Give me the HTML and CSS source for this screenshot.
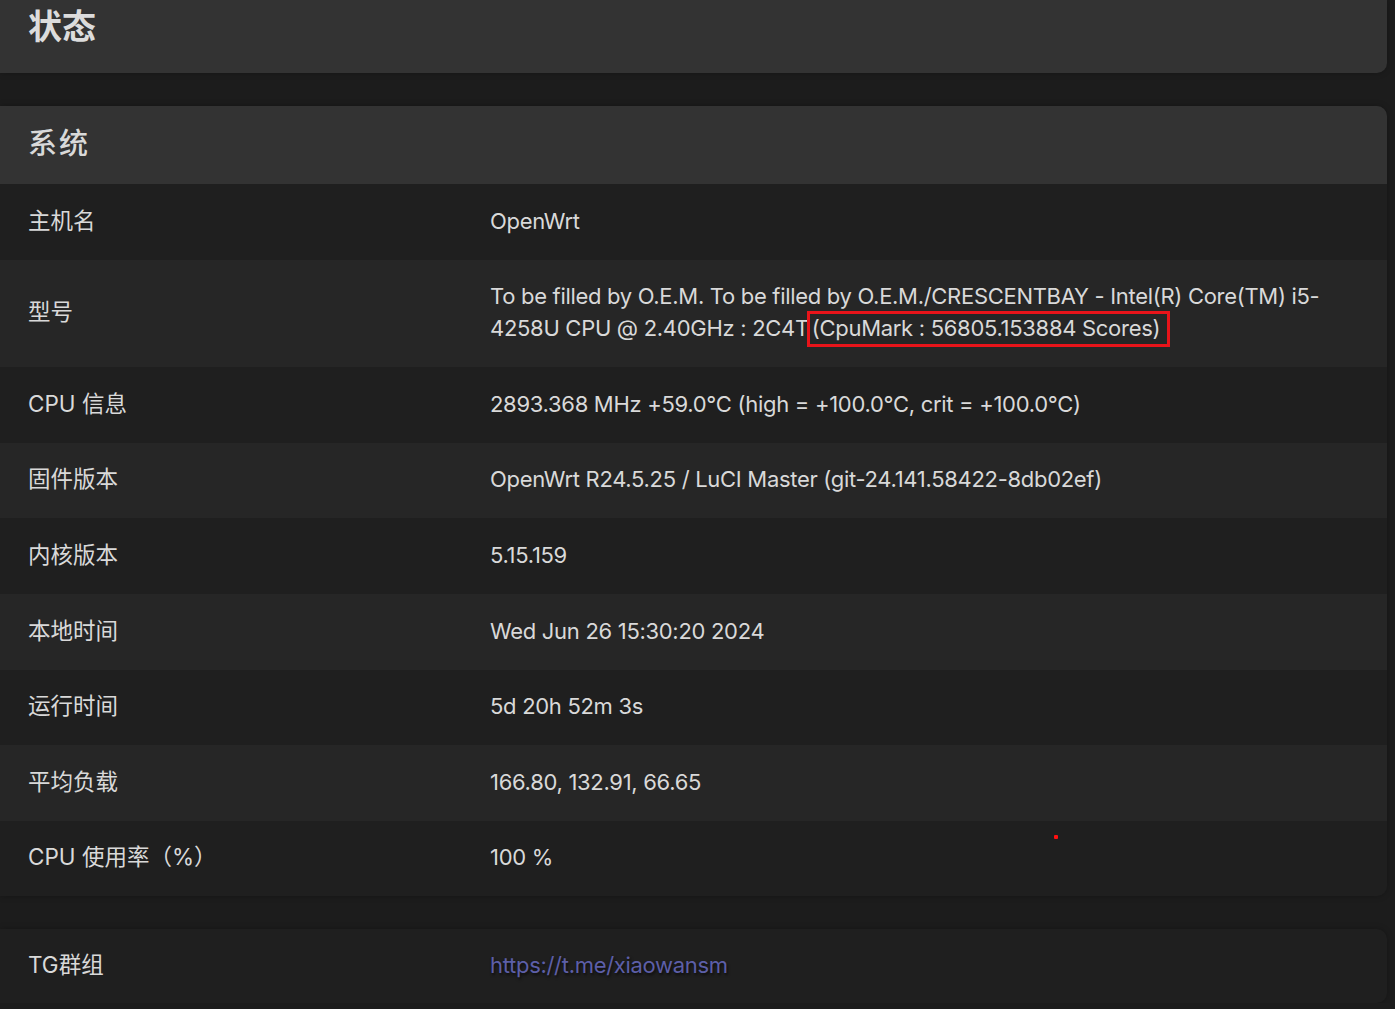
FILE: index.html
```html
<!DOCTYPE html>
<html lang="zh-CN">
<head>
<meta charset="utf-8">
<title>状态</title>
<link rel="stylesheet" href="styles.css">
</head>
<body>
<main class="page">
  <section class="card card-status">
    <h2 class="page-title">状态</h2>
  </section>

  <section class="card card-system">
    <h3 class="card-title">系统</h3>
    <div class="table">
      <div class="row"><div class="key">主机名</div><div class="val">OpenWrt</div></div>
      <div class="row"><div class="key">型号</div><div class="val"><span>To be filled by O.E.M. To be filled by O.E.M./CRESCENTBAY - Intel(R) Core(TM) i5-4258U CPU @ 2.40GHz : 2C4T</span> <span class="mark">(CpuMark : 56805.153884 Scores)</span></div></div>
      <div class="row"><div class="key">CPU 信息</div><div class="val">2893.368 MHz +59.0°C (high = +100.0°C, crit = +100.0°C)</div></div>
      <div class="row"><div class="key">固件版本</div><div class="val">OpenWrt R24.5.25 / LuCI Master (git-24.141.58422-8db02ef)</div></div>
      <div class="row"><div class="key">内核版本</div><div class="val">5.15.159</div></div>
      <div class="row"><div class="key">本地时间</div><div class="val">Wed Jun 26 15:30:20 2024</div></div>
      <div class="row"><div class="key">运行时间</div><div class="val">5d 20h 52m 3s</div></div>
      <div class="row"><div class="key">平均负载</div><div class="val">166.80, 132.91, 66.65</div></div>
      <div class="row row-dot"><div class="key">CPU 使用率（%）</div><div class="val">100 %</div><span class="dot"></span></div>
    </div>
  </section>

  <section class="card card-tg">
    <div class="row"><div class="key">TG群组</div><div class="val"><a class="link" href="#">https://t.me/xiaowansm</a></div></div>
  </section>
</main>
</body>
</html>
```

FILE: styles.css
```css
html, body {
  margin: 0;
  padding: 0;
  background: #1c1c1c;
}
body {
  font-family: "Inter", "Noto Sans CJK SC", sans-serif;
  color: #d9d9d9;
  font-size: 22px;
}
.page {
  display: flex;
  flex-direction: column;
  gap: 33px;
  padding-right: 8px;
}
.card {
  border-radius: 0 10px 10px 0;
  overflow: hidden;
  box-shadow: 0 0 6px rgba(0,0,0,0.25);
}
.card-status {
  background: #333333;
  height: 73px;
  border-radius: 0 0 10px 0;
}
.page-title {
  margin: 0;
  padding: 7px 28px 0;
  font-size: 34px;
  line-height: 40px;
  font-weight: 700;
  color: #dcdcdc;
}
.card-system {
  background: #1f1f1f;
}
.card-title {
  margin: 0;
  background: #333333;
  height: 78px;
  box-sizing: border-box;
  padding: 0 28px 8px;
  display: flex;
  align-items: center;
  font-size: 29px;
  font-weight: 500;
  letter-spacing: 2px;
  color: #d9d9d9;
}
.row {
  display: grid;
  grid-template-columns: 462px 1fr;
  align-items: center;
  padding: 20.6px 0 23px;
  line-height: 32px;
  position: relative;
}
.table .row:nth-child(even) {
  background: #262626;
}
.table .row:nth-child(odd) {
  background: #1f1f1f;
}
.key {
  padding: 0 28px;
  font-size: 22.5px;
}
.val {
  padding: 0 28px;
  letter-spacing: -0.3px;
}
.mark {
  position: relative;
  margin-left: -3px;
}
.mark::after {
  content: "";
  position: absolute;
  left: -5px;
  right: -10px;
  top: -4px;
  bottom: -6px;
  border: 3px solid #e8141a;
}
.dot {
  position: absolute;
  left: 1054px;
  top: 14px;
  width: 4px;
  height: 4px;
  border-radius: 1px;
  background: #ff1010;
}
.card-tg {
  background: #1f1f1f;
}
.card-tg .row {
  padding: 20px 0 22px;
}
.link {
  color: #5d5fa8;
  text-decoration: none;
  text-shadow: 1px 2px 3px rgba(0,0,0,0.7);
}
```
